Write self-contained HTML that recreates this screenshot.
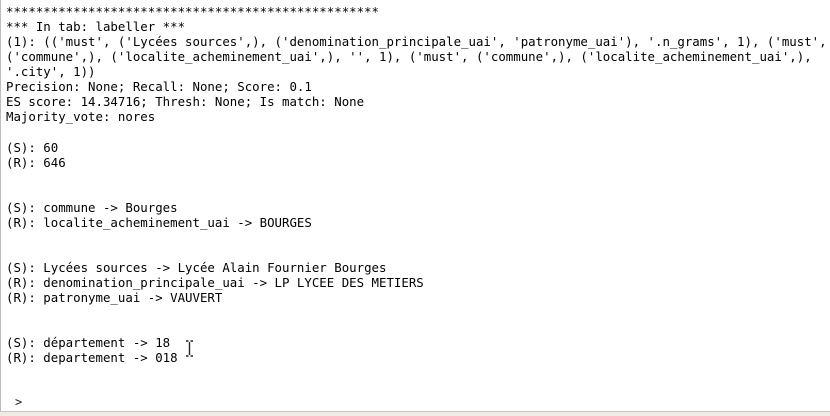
<!DOCTYPE html>
<html><head><style>
html,body{margin:0;padding:0;width:830px;height:415px;overflow:hidden;background:#fff}
.wrap{position:absolute;left:0;top:0;width:830px;height:411px;border-left:1px solid #bdbdbd;box-sizing:border-box;background:#fff}
pre{margin:0;position:absolute;left:5px;top:4px;font-family:"DejaVu Sans Mono","Liberation Mono",monospace;font-size:12.4px;line-height:15.07px;color:#000;white-space:pre}
.bot{position:absolute;left:0;top:411px;width:830px;height:4px;background:#efebe7;border-top:1px solid #c4c4c4}
.prompt{position:absolute;left:14px;top:395px;font-family:"DejaVu Sans Mono",monospace;font-size:12px;color:#222}
</style></head><body>
<div class="wrap">
<pre>**************************************************
*** In tab: labeller ***
(1): (('must', ('Lycées sources',), ('denomination_principale_uai', 'patronyme_uai'), '.n_grams', 1), ('must',
('commune',), ('localite_acheminement_uai',), '', 1), ('must', ('commune',), ('localite_acheminement_uai',),
'.city', 1))
Precision: None; Recall: None; Score: 0.1
ES score: 14.34716; Thresh: None; Is match: None
Majority_vote: nores

(S): 60
(R): 646


(S): commune -&gt; Bourges
(R): localite_acheminement_uai -&gt; BOURGES


(S): Lycées sources -&gt; Lycée Alain Fournier Bourges
(R): denomination_principale_uai -&gt; LP LYCEE DES METIERS
(R): patronyme_uai -&gt; VAUVERT


(S): département -&gt; 18
(R): departement -&gt; 018</pre>
<svg style="position:absolute;left:184px;top:340px" width="9" height="17"><path d="M1 1h2.5M5.5 1h2.5M4.5 2v13M1 16h2.5M5.5 16h2.5" stroke="#222" stroke-width="1.4" fill="none"/></svg>
<div class="prompt">&gt;</div>
</div>
<div class="bot"></div>
</body></html>
